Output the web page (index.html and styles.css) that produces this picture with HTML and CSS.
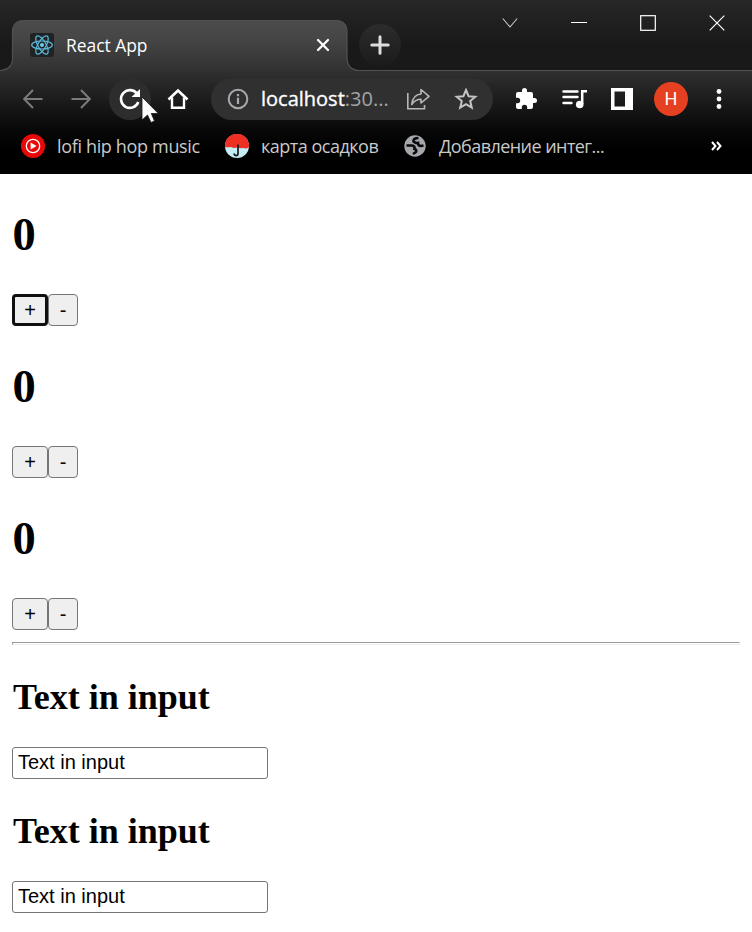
FILE: index.html
```html
<!DOCTYPE html>
<html lang="en">
<head>
<meta charset="utf-8">
<title>React App</title>
<link rel="stylesheet" href="styles.css">
</head>
<body>
<header class="browser">
  <div class="titlebar">
    <svg class="tab-shape" width="752" height="72" viewBox="0 0 752 72">
      <defs><linearGradient id="tabfill" x1="0" y1="0" x2="0" y2="1"><stop offset="0" stop-color="#4b4b4b"/><stop offset=".35" stop-color="#464646"/><stop offset="1" stop-color="#303030"/></linearGradient></defs>
      <path d="M0 70.500C8 70 12.500 66 12.500 58V32Q12.500 20 24.500 20H335Q347 20 347 32V57Q347 70.500 360 70.500V72H0Z" fill="url(#tabfill)"/>
      <path d="M0 70.500C8 70 12.500 66 12.500 58V32Q12.500 20.500 24.500 20.500H335Q347 20.500 347 32V57Q347 70.500 360 70.500H752" fill="none" stroke="#515151" stroke-width="1.200"/>
    </svg>
    <div class="tab">
      <svg width="24" height="24" viewBox="0 0 24 24"><rect width="24" height="24" rx="3" fill="#202224"/><g fill="none" stroke="#5cb9da" stroke-width="1.200"><ellipse cx="12" cy="12" rx="10.300" ry="4"/><ellipse cx="12" cy="12" rx="10.300" ry="4" transform="rotate(60 12 12)"/><ellipse cx="12" cy="12" rx="10.300" ry="4" transform="rotate(120 12 12)"/></g><circle cx="12" cy="12" r="2" fill="#6bd0ef"/></svg>
      <span class="tab-title">React App</span>
      <svg class="tab-close" width="14" height="14" viewBox="0 0 14 14"><path d="M2 2 12 12M12 2 2 12" stroke="#fff" stroke-width="2.300" stroke-linecap="round"/></svg>
    </div>
    <div class="new-tab"><svg width="20" height="20" viewBox="0 0 20 20"><path d="M10 1.800V18.200M1.800 10H18.200" stroke="#ddd" stroke-width="3" stroke-linecap="round"/></svg></div>
    <div class="window-buttons">
      <svg width="16" height="16" viewBox="0 0 16 16"><path d="M.8 3.500 8 12 15.200 3.500" fill="none" stroke="#ccc" stroke-width="1.100"/></svg>
      <svg width="16" height="16" viewBox="0 0 16 16"><path d="M0 7.500H16" stroke="#fff"/></svg>
      <svg width="16" height="16" viewBox="0 0 16 16"><rect x=".7" y=".7" width="14.600" height="14.600" fill="none" stroke="#fff" stroke-width="1.200"/></svg>
      <svg width="16" height="16" viewBox="0 0 16 16"><path d="M.7.700 15.300 15.300M15.300.700.700 15.300" stroke="#fff" stroke-width="1.200"/></svg>
    </div>
  </div>
  <div class="toolbar">
    <svg class="back" width="20" height="20" viewBox="0 0 20 20"><path d="M19.500 10H1.500M10 1 1.200 10 10 19" fill="none" stroke="#7b7b7b" stroke-width="2"/></svg>
    <svg class="forward" width="20" height="20" viewBox="0 0 20 20"><path d="M.5 10H18.500M10 1 18.800 10 10 19" fill="none" stroke="#7b7b7b" stroke-width="2"/></svg>
    <div class="reload">
      <svg width="24" height="24" viewBox="0 0 24 24"><path d="M19.300 7A8.900 8.900 0 1 0 20.300 15" fill="none" stroke="#fff" stroke-width="2.600"/><path d="M22 2V10H13.500Z" fill="#fff"/></svg>
      <svg class="cursor" width="18" height="28" viewBox="0 0 18 28"><path d="M1 1V24L6.500 19 10 26.500 13.500 25 10.300 17.500H17.300Z" fill="#fff" stroke="#151515" stroke-width=".8"/></svg>
    </div>
    <svg class="home" width="22" height="22" viewBox="0 0 22 22"><path d="M5 9.500V19.700H17V9.500" fill="none" stroke="#fff" stroke-width="2.400"/><path d="M1.500 11.500 11 2.500 20.500 11.500" fill="none" stroke="#fff" stroke-width="2.600"/></svg>
    <div class="address">
      <svg class="info" width="22" height="22" viewBox="0 0 22 22"><circle cx="11" cy="11" r="9.300" fill="none" stroke="#a5a8ad" stroke-width="2"/><path d="M11 9.800V16M11 6V8.200" stroke="#a5a8ad" stroke-width="2.200"/></svg>
      <span class="url"><b>localhost</b>:30...</span>
      <svg class="share" width="24" height="24" viewBox="0 0 24 24"><g fill="none" stroke="#b7b7b7" stroke-width="1.600"><path d="M1.800 6V21.700H18.500V18"/><path d="M5.700 17.500C6.500 10.500 10 7.400 15 7V2.500L23 9.400 15 16V12.200C10.500 12.200 8 14 5.700 17.500Z" stroke-linejoin="round"/></g></svg>
      <svg class="star" width="24" height="24" viewBox="0 0 24 24"><path d="M12 3 14.600 9.200 21.300 9.700 16.200 14.100 17.800 20.700 12 17.200 6.200 20.700 7.800 14.100 2.700 9.700 9.400 9.200Z" fill="none" stroke="#c4c4c4" stroke-width="2"/></svg>
    </div>
    <svg class="puzzle" width="24" height="24" viewBox="0 0 24 24"><path d="M20.500 11H19V7a2 2 0 0 0-2-2h-4V3.500a2.500 2.500 0 0 0-5 0V5H4a2 2 0 0 0-2 2v3.800h1.500a2.700 2.700 0 0 1 0 5.400H2V20a2 2 0 0 0 2 2h3.800v-1.500a2.700 2.700 0 0 1 5.400 0V22H17a2 2 0 0 0 2-2v-4h1.500a2.500 2.500 0 0 0 0-5Z" fill="#fff"/></svg>
    <svg class="queue" width="26" height="22" viewBox="0 0 26 22"><path d="M1.500 3.500H15.500M1.500 9H15.500M1.500 15H9.500" stroke="#fff" stroke-width="2.400" stroke-linecap="round"/><path d="M20.200 16V3.200H25" fill="none" stroke="#fff" stroke-width="2.500"/><circle cx="17.700" cy="16.500" r="3.800" fill="#fff"/></svg>
    <svg class="panel" width="22" height="22" viewBox="0 0 22 22"><path fill="#fff" fill-rule="evenodd" d="M0 0H22V22H0ZM3.500 3.500V18.500H14V3.500Z"/></svg>
    <div class="avatar">H</div>
    <svg class="menu" width="6" height="20" viewBox="0 0 6 20"><g fill="#fff"><circle cx="3" cy="2.500" r="2.400"/><circle cx="3" cy="10" r="2.400"/><circle cx="3" cy="17.500" r="2.400"/></g></svg>
  </div>
  <nav class="bookmarks">
    <svg width="24" height="24" viewBox="0 0 24 24"><circle cx="12" cy="12" r="12" fill="#e80808"/><circle cx="12" cy="12" r="6.700" fill="none" stroke="#fff" stroke-width="1.300"/><path d="M9.600 8.500 15.700 12 9.600 15.500Z" fill="#fff"/></svg>
    <span class="mark lofi">lofi hip hop music</span>
    <svg width="24" height="24" viewBox="0 0 24 24"><circle cx="12" cy="12" r="12" fill="#c5edf5"/><path d="M.1 13A12 12 0 1 1 23.900 13.500Q21 15 18 14 15 14.500 12 13.500 9 14.500 6 13Q3 13.500 .1 13Z" fill="#ee3024"/><path d="M13 10.500V19.500Q13 21.600 11.200 21.600T9 19.500" fill="none" stroke="#191919" stroke-width="1.700"/></svg>
    <span class="mark rain">карта осадков</span>
    <svg width="22" height="22" viewBox="0 0 22 22"><circle cx="11" cy="11" r="10.700" fill="#a4a8ad"/><path d="M14.500 3Q9 3 9.500 6.500 12 8.500 14 8 14 11 17 11L19.500 10.500M2.500 10.500H8Q11 11 10.500 14 13 14.500 12 17L9 19" fill="none" stroke="#090909" stroke-width="2.600"/></svg>
    <span class="mark integration">Добавление интег...</span>
    <svg class="more" width="11" height="10" viewBox="0 0 11 10"><path d="M1 1 4.500 5 1 9M6 1 9.500 5 6 9" fill="none" stroke="#fff" stroke-width="2"/></svg>
  </nav>
</header>
<main>
  <section class="counter"><h1>0</h1><div class="buttons"><button class="plus focused">+</button><button class="minus">-</button></div></section>
  <section class="counter"><h1>0</h1><div class="buttons"><button class="plus">+</button><button class="minus">-</button></div></section>
  <section class="counter"><h1>0</h1><div class="buttons"><button class="plus">+</button><button class="minus">-</button></div></section>
  <hr>
  <section class="field"><h2>Text in input</h2><input type="text" value="Text in input"></section>
  <section class="field"><h2>Text in input</h2><input type="text" value="Text in input"></section>
</main>
</body>
</html>
```
FILE: styles.css
```css
* { box-sizing: border-box; }
body { margin: 0; height: 932px; overflow: hidden; background: #fff; color: #000; font-family: "Liberation Serif", serif; }
svg { display: block; flex-shrink: 0; }
.browser { height: 174px; background: linear-gradient(#303030 71px, #1b1b1b 101px, #080808 130px, #000 150px); font-family: "Open Sans", "Noto Sans", sans-serif; }
.titlebar { position: relative; display: flex; height: 71px; background: linear-gradient(#272727, #202020 22px, #191919 45px, #191919); }
.tab-shape { position: absolute; left: 0; top: 0; }
.tab { position: relative; display: flex; align-items: center; width: 335px; height: 50px; margin: 20px 0 0 12px; padding: 0 17px 0 18px; }
.tab-title { margin-left: 12px; color: #fff; font-size: 17.400px; line-height: 24px; white-space: nowrap; }
.tab-close { margin-left: auto; }
.new-tab { position: relative; display: flex; align-items: center; justify-content: center; width: 42px; height: 42px; margin: 24px 0 0 12px; border-radius: 50%; background: linear-gradient(#2c2c2c, #1b1b1b); }
.window-buttons { position: relative; display: flex; gap: 53px; margin: 15px 0 0 101px; }
.toolbar { display: flex; align-items: center; height: 55px; padding-left: 23px; }
.forward { margin-left: 28px; }
.reload { position: relative; display: flex; align-items: center; justify-content: center; width: 42px; height: 42px; margin-left: 18px; border-radius: 50%; background: #2d2d2d; }
.cursor { position: absolute; left: 32px; top: 18px; }
.home { margin-left: 16px; }
.address { display: flex; align-items: center; width: 282px; height: 42px; margin-left: 22px; padding-left: 16px; border-radius: 21px; background: #303030; }
.url { width: 127px; margin-left: 12px; color: #a4a4a4; font-size: 20px; line-height: 28px; white-space: nowrap; }
.url b { color: #fff; font-weight: 400; -webkit-text-stroke: .35px #fff; }
.share { margin-left: 18px; }
.star { margin-left: 24px; }
.puzzle { margin-left: 21px; }
.queue { margin-left: 24px; }
.panel { margin-left: 23px; }
.avatar { width: 34px; height: 34px; margin-left: 21px; border-radius: 50%; background: #e54022; color: #fff; font: 18px/34px Roboto, sans-serif; text-align: center; }
.menu { margin-left: 28px; }
.bookmarks { display: flex; align-items: center; height: 40px; padding: 0 30px 0 21px; color: #c9c9c9; font-size: 18px; line-height: 26px; }
.mark { white-space: nowrap; margin-left: 12px; }
.lofi { width: 168px; letter-spacing: -.34px; }
.rain { width: 143px; letter-spacing: -.5px; }
.integration { margin-left: 13px; letter-spacing: -.55px; }
.bookmarks .more { margin-left: auto; }
main { padding: 0 12px; }
h1, h2 { margin: 0; font-weight: bold; }
h1 { padding: 34px 0 0 .5px; margin-bottom: 32px; font-size: 46.500px; line-height: 54px; }
.buttons { display: flex; height: 32px; }
button { height: 32px; padding: 0; border: 1px solid #767676; border-radius: 4px; background: #efefef; color: #000; font: 20px/28px "Liberation Sans", sans-serif; }
.plus { width: 36px; }
.minus { width: 30px; }
.focused { border: 3px solid #101010; line-height: 26px; }
hr { height: 3px; margin: 12px 0 0; border: 1px solid; border-color: #9a9a9a #eee #eee #9a9a9a; }
h2 { padding: 31px 0 0 1px; margin-bottom: 29px; font-size: 36px; line-height: 42px; }
input { display: block; width: 256px; height: 32px; padding: 0 5px 1px; border: 1px solid #767676; border-radius: 3px; background: #fff; color: #000; font: 20px/28px "Liberation Sans", sans-serif; }
```
